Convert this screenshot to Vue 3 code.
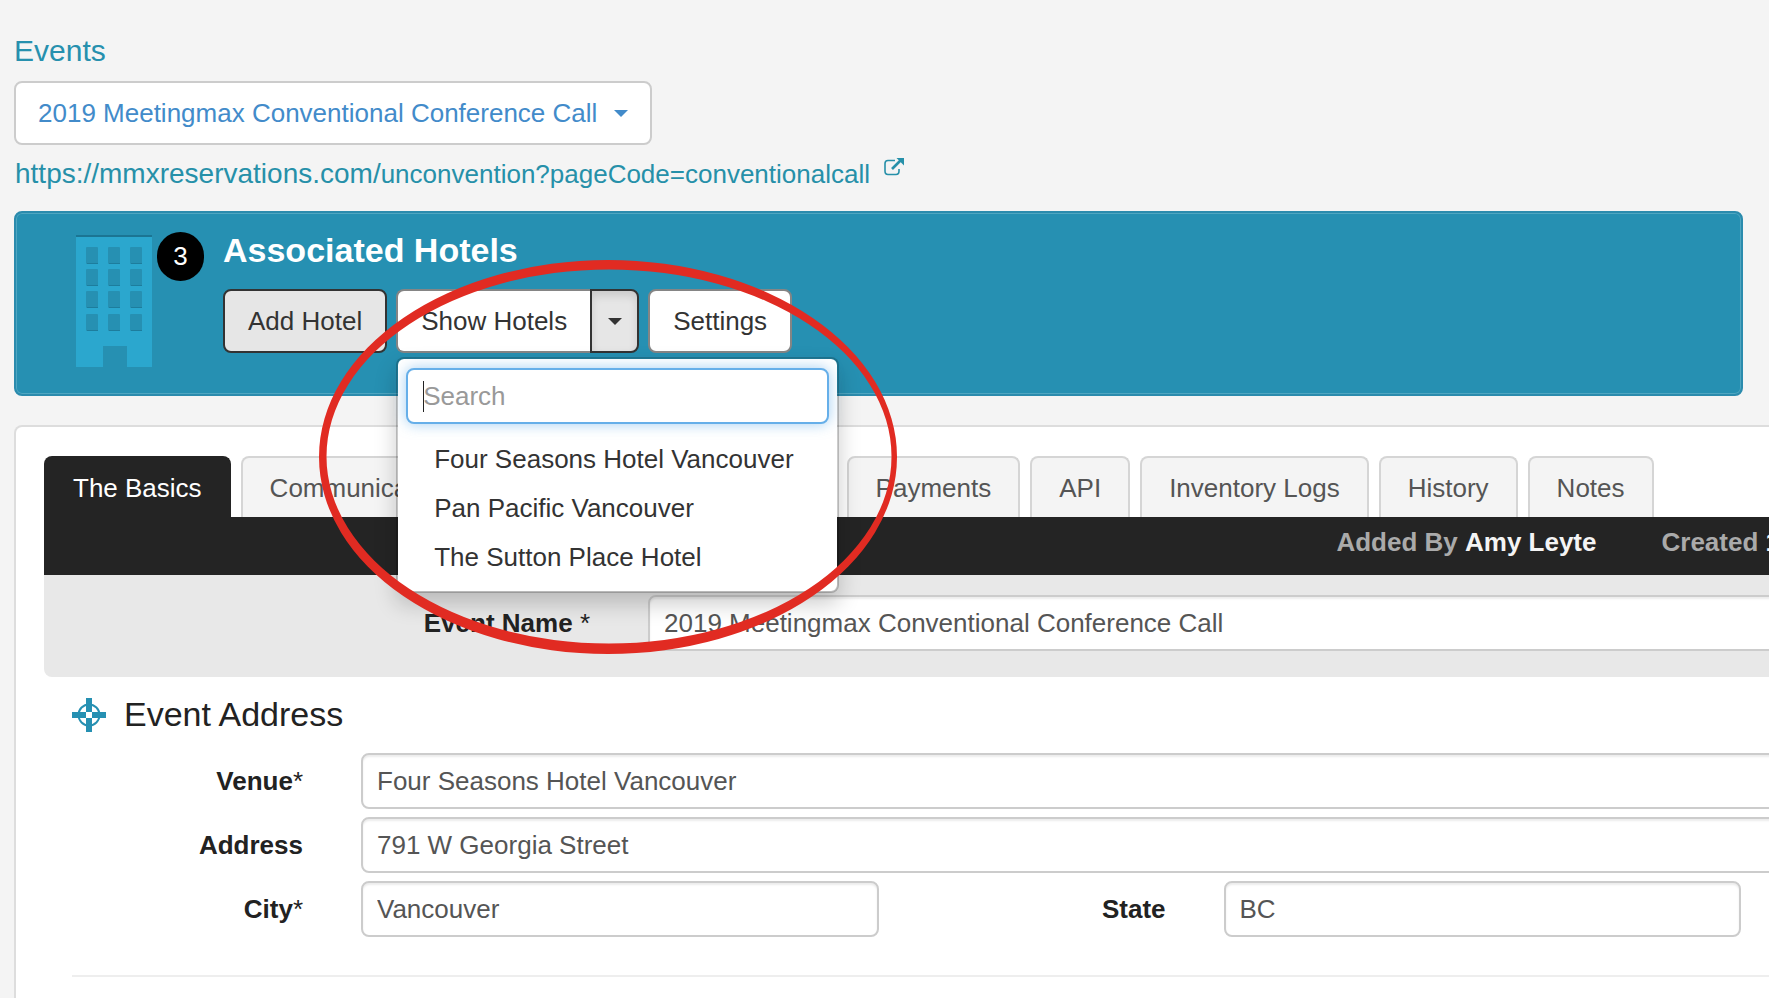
<template>
  <div class="page">
    <header class="header">
      <a href="#" class="breadcrumb">Events</a>
      <button type="button" class="event-picker">
        2019 Meetingmax Conventional Conference Call
        <span class="caret"></span>
      </button>
      <a href="#" class="event-url">
        <span>
          <span class="host">https://mmxreservations.com/</span>unconvention?pageCode=conventionalcall
        </span>
        <svg class="external-icon" viewBox="0 0 20 18" aria-hidden="true">
          <path
            d="M11 2.500H4Q1 2.500 1 5.500V13Q1 16.500 4 16.500H12Q15 16.500 15 13V11"
            fill="none"
            stroke="currentColor"
            stroke-width="1.6"
          />
          <path d="M8 11L16.500 2.500" stroke="currentColor" stroke-width="2.6" />
          <path d="M12.500 0H20V7.500Z" fill="currentColor" />
        </svg>
      </a>
    </header>

    <section class="hotels">
      <svg class="building" viewBox="0 0 76 132" aria-hidden="true">
        <path d="M0 0H76V132H51V111H27V132H0Z" fill="#2ba7ce" />
        <rect width="76" height="2" fill="#1b7593" />
        <g v-for="y in windowRows" :key="y">
          <g v-for="x in windowCols" :key="x">
            <rect :x="x" :y="y" width="12" height="17" rx="1" fill="#2690b2" />
            <rect :x="x + 1" :y="y + 16" width="11" height="1" fill="#1d7d9d" />
          </g>
        </g>
      </svg>
      <span class="badge">3</span>
      <div class="hotels-body">
        <h2 class="hotels-title">Associated Hotels</h2>
        <div class="actions">
          <button type="button" class="btn btn-active">Add Hotel</button>
          <div class="btn-group">
            <button type="button" class="btn btn-left">Show Hotels</button>
            <button
              type="button"
              class="btn btn-active btn-toggle"
              aria-label="Choose hotel"
              @click="menuOpen = !menuOpen"
            >
              <span class="caret"></span>
            </button>
            <div v-if="menuOpen" class="menu">
              <div class="search">
                <input
                  v-model="search"
                  type="text"
                  class="search-input"
                  placeholder="Search"
                  aria-label="Search"
                />
                <span class="cursor"></span>
              </div>
              <ul class="menu-list">
                <li v-for="hotel in filteredHotels" :key="hotel">
                  <a href="#" class="menu-item">{{ hotel }}</a>
                </li>
              </ul>
            </div>
          </div>
          <button type="button" class="btn">Settings</button>
        </div>
      </div>
    </section>

    <main class="panel">
      <nav class="tabs">
        <a
          v-for="tab in tabs"
          :key="tab.title"
          href="#"
          :class="['tab', { active: tab.active, wide: tab.wide }]"
        >
          {{ tab.title }}
        </a>
      </nav>
      <div class="meta">
        <span>Added By <b>Amy Leyte</b></span>
        <span>Created <b>1</b></span>
      </div>
      <div class="name-row">
        <label class="label" for="name">Event Name <i>*</i></label>
        <input id="name" v-model="form.name" type="text" class="field" />
      </div>

      <section class="address">
        <h3 class="address-title">
          <svg class="target-icon" viewBox="0 0 34 34" aria-hidden="true">
            <circle cx="17" cy="17" r="10.500" fill="none" stroke="#2690b2" stroke-width="2" />
            <path
              d="M14 0H20V14H14ZM14 20H20V34H14ZM0 14H14V20H0ZM20 14H34V20H20Z"
              fill="#2690b2"
            />
          </svg>
          Event Address
        </h3>
        <div class="row">
          <label class="label" for="venue">Venue<i>*</i></label>
          <input id="venue" v-model="form.venue" type="text" class="field" />
        </div>
        <div class="row">
          <label class="label" for="street">Address</label>
          <input id="street" v-model="form.street" type="text" class="field" />
        </div>
        <div class="row row-split">
          <label class="label" for="city">City<i>*</i></label>
          <input id="city" v-model="form.city" type="text" class="field" />
          <label class="label" for="state">State</label>
          <input id="state" v-model="form.state" type="text" class="field" />
        </div>
        <hr class="divider" />
      </section>
    </main>

    <!-- hand-drawn style ring, thicker at the bottom left -->
    <svg class="ring" viewBox="0 0 578 394" aria-hidden="true">
      <path
        fill-rule="evenodd"
        fill="#e12b22"
        d="M0 197A289 197 0 1 1 578 197A289 197 0 1 1 0 197ZM7.500 196.500A282.500 187 0 1 0 572.500 196.500A282.500 187 0 1 0 7.500 196.500Z"
      />
    </svg>
  </div>
</template>

<script setup>
import { computed, reactive, ref } from "vue";

const windowCols = [10, 32, 54];
const windowRows = [12, 34, 56, 79];

const menuOpen = ref(true);
const search = ref("");

const hotels = [
  "Four Seasons Hotel Vancouver",
  "Pan Pacific Vancouver",
  "The Sutton Place Hotel",
];

const filteredHotels = computed(() =>
  hotels.filter((h) => h.toLowerCase().includes(search.value.toLowerCase()))
);

const tabs = [
  { title: "The Basics", active: true },
  { title: "Communications", wide: true },
  { title: "Payments" },
  { title: "API" },
  { title: "Inventory Logs" },
  { title: "History" },
  { title: "Notes" },
];

const form = reactive({
  name: "2019 Meetingmax Conventional Conference Call",
  venue: "Four Seasons Hotel Vancouver",
  street: "791 W Georgia Street",
  city: "Vancouver",
  state: "BC",
});
</script>

<style>
body {
  margin: 0;
  background: #f4f4f4;
}
</style>

<style scoped>
.page {
  position: relative;
  display: flex;
  flex-direction: column;
  box-sizing: border-box;
  min-height: 100vh;
  padding: 34px 26px 0 14px;
  overflow: hidden;
  background: #f4f4f4;
  color: #222;
  font-family: "Liberation Sans", Arial, sans-serif;
  font-size: 26px;
}

.page * {
  box-sizing: border-box;
}

a {
  text-decoration: none;
}

button,
input {
  font: inherit;
}

.header {
  display: flex;
  flex-direction: column;
  align-items: flex-start;
  gap: 13px;
}

.breadcrumb {
  color: #2690ae;
  font-size: 30px;
  line-height: 34px;
}

.event-picker {
  display: flex;
  align-items: center;
  justify-content: space-between;
  min-width: 638px;
  height: 64px;
  padding: 0 22px;
  border: 2px solid #ccc;
  border-radius: 8px;
  background: #fff;
  color: #428bca;
}

.caret {
  border-top: 7px solid currentColor;
  border-left: 7px solid transparent;
  border-right: 7px solid transparent;
}

.event-url {
  display: flex;
  align-items: flex-start;
  gap: 14px;
  padding-left: 1px;
  color: #2690a9;
  line-height: 32px;
}

.host {
  font-size: 28px;
}

.external-icon {
  width: 20px;
  height: 18px;
}

.hotels {
  display: flex;
  align-items: flex-start;
  margin-top: 21px;
  padding: 18px 60px 27px;
  border: 2px solid #2b8bad;
  border-radius: 8px;
  background: #2690b2;
  box-shadow: inset 0 0 0 1px #4fa6c1;
}

.building {
  flex: none;
  width: 76px;
  height: 132px;
  margin-top: 4px;
}

.badge {
  flex: none;
  width: 47px;
  margin: 1px 19px 0 5px;
  border-radius: 24px;
  background: #000;
  color: #fff;
  line-height: 49px;
  text-align: center;
}

.hotels-title {
  margin: 0 0 19px;
  color: #fff;
  font-size: 34px;
  line-height: 39px;
}

.actions {
  display: flex;
  gap: 9px;
}

.btn {
  height: 64px;
  padding: 0 23px;
  border: 2px solid #858585;
  border-radius: 8px;
  background: #fff;
  color: #333;
}

.btn-active {
  border-color: #333;
  background: #e6e6e6;
}

.btn-group {
  position: relative;
  display: flex;
}

.btn-left {
  border-right: 0;
  border-radius: 8px 0 0 8px;
}

.btn-toggle {
  display: flex;
  align-items: center;
  justify-content: center;
  width: 49px;
  padding: 0;
  border-radius: 0 8px 8px 0;
  box-shadow: inset 0 5px 9px rgba(0, 0, 0, 0.12);
}

.menu {
  position: absolute;
  top: calc(100% + 4px);
  left: 0;
  z-index: 2;
  width: 443px;
  padding: 9px 8px;
  border: 2px solid rgba(0, 0, 0, 0.2);
  border-radius: 8px;
  background: #fff;
  background-clip: padding-box;
  box-shadow: 0 11px 22px rgba(0, 0, 0, 0.2);
}

.search {
  position: relative;
}

.search-input {
  display: block;
  width: 100%;
  height: 56px;
  padding: 0 15px;
  border: 2px solid #66afe9;
  border-radius: 8px;
  outline: none;
  background: #fff;
  color: #555;
  box-shadow: 0 0 14px rgba(102, 175, 233, 0.6);
  caret-color: transparent;
}

.search-input::placeholder {
  color: #999;
}

.cursor {
  position: absolute;
  top: 13px;
  left: 17px;
  width: 1px;
  height: 31px;
  background: #222;
}

.menu-list {
  margin: 11px 0 0;
  padding: 0;
  list-style: none;
}

.menu-item {
  display: block;
  padding: 0 28px;
  color: #333;
  line-height: 49px;
  white-space: nowrap;
}

.panel {
  flex: 1;
  margin-top: 29px;
  margin-right: -84px;
  padding: 29px 28px 20px;
  border: 2px solid #ddd;
  border-bottom: 0;
  border-radius: 8px 0 0 0;
  background: #fff;
}

.tabs {
  display: flex;
  gap: 10px;
}

.tab {
  height: 61px;
  padding: 0 27px;
  border: 2px solid #d5d5d5;
  border-bottom: 0;
  border-radius: 8px 8px 0 0;
  background: #f4f4f4;
  color: #555;
  line-height: 60px;
}

.tab.wide {
  width: 596px;
}

.tab.active {
  border-color: #242424;
  background: #242424;
  color: #fff;
}

.meta {
  display: flex;
  justify-content: flex-end;
  gap: 65px;
  height: 58px;
  padding-right: 17px;
  background: #242424;
  color: #aaa;
  font-weight: bold;
  line-height: 50px;
}

.meta b {
  color: #f4f4f4;
}

.name-row {
  display: grid;
  grid-template-columns: 546px 1fr;
  column-gap: 58px;
  align-items: center;
  padding: 20px 0 26px;
  border-radius: 0 0 0 8px;
  background: #e8e8e8;
}

.label {
  font-weight: bold;
  text-align: right;
}

.label i {
  font-style: normal;
  font-weight: normal;
}

.field {
  width: 100%;
  min-width: 0;
  height: 56px;
  padding: 0 14px;
  border: 2px solid #ccc;
  border-radius: 8px;
  background: #fff;
  color: #555;
  box-shadow: inset 0 2px 2px rgba(0, 0, 0, 0.08);
}

.address {
  display: flex;
  flex-direction: column;
  gap: 8px;
  padding: 18px 0 0 28px;
}

.address-title {
  display: flex;
  align-items: center;
  gap: 18px;
  margin: 0 0 11px;
  font-size: 34px;
  font-weight: normal;
  line-height: 39px;
}

.target-icon {
  width: 34px;
  height: 34px;
}

.row {
  display: grid;
  grid-template-columns: 231px 1fr;
  column-gap: 58px;
  align-items: center;
}

.row-split {
  grid-template-columns: 231px 1fr 229px 1fr;
  padding-right: 56px;
}

.divider {
  width: 100%;
  margin: 30px 0 0;
  border: 0;
  border-top: 2px solid #eee;
}

.ring {
  position: absolute;
  top: 260px;
  left: 319px;
  z-index: 3;
  width: 578px;
  height: 394px;
  pointer-events: none;
}
</style>
